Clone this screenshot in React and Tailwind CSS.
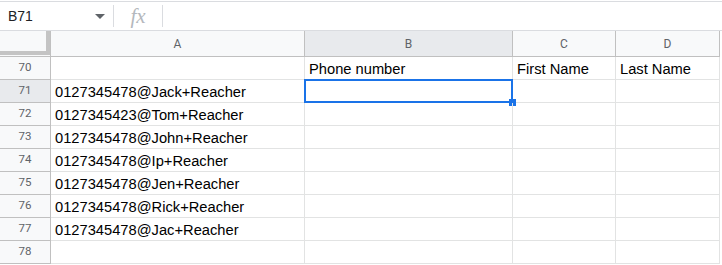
import React from "react";

const rows = [
  { n: 70, a: "", b: "Phone number", c: "First Name", d: "Last Name" },
  { n: 71, a: "0127345478@Jack+Reacher", sel: true },
  { n: 72, a: "0127345423@Tom+Reacher" },
  { n: 73, a: "0127345478@John+Reacher" },
  { n: 74, a: "0127345478@Ip+Reacher" },
  { n: 75, a: "0127345478@Jen+Reacher" },
  { n: 76, a: "0127345478@Rick+Reacher" },
  { n: 77, a: "0127345478@Jac+Reacher" },
  { n: 78, a: "" },
];

const font = { fontFamily: "Roboto, 'Liberation Sans', Arial, sans-serif" };
const cellFont = { fontFamily: "'Liberation Sans', Arial, sans-serif" };

export default function App() {
  return (
    <div className="w-[722px] h-[265px] bg-white overflow-hidden relative" style={font}>
      {/* formula bar */}
      <div className="mt-[1px] border-t border-b border-[#dadce0] h-[30px] flex items-center">
        <div className="w-[113px] h-full flex items-center pl-[8px] pr-[8px]">
          <span className="text-[14px] text-[#202124] flex-1" style={cellFont}>B71</span>
          <svg width="10" height="5" viewBox="0 0 10 5">
            <path d="M0 0 L10 0 L5 5 Z" fill="#5f6368" />
          </svg>
        </div>
        <div className="w-px h-[22px] bg-[#dadce0]" />
        <div className="w-[48px] flex justify-center">
          <span className="text-[21px] italic text-[#b4b8bd] leading-none" style={{ fontFamily: "'Liberation Serif', 'DejaVu Serif', serif" }}>fx</span>
        </div>
        <div className="w-px h-[22px] bg-[#dadce0]" />
      </div>

      {/* column header */}
      <div className="flex h-[26px]">
        <div className="w-[51px] h-full bg-[#f8f9fa] border-r border-[#c0c0c0] relative">
          <div className="absolute left-0 top-0 w-[50px] h-[24px] border-r-[4px] border-b-[4px] border-[#c4c4c4] bg-[#f8f9fa]" />
          <div className="absolute left-0 bottom-0 w-full h-px bg-[#c0c0c0]" />
        </div>
        <div className="w-[254px] h-full bg-[#f8f9fa] border-r border-b border-[#c0c0c0] flex items-center justify-center text-[12px] text-[#5f6368]">A</div>
        <div className="w-[208px] h-full bg-[#e8eaed] border-r border-b border-[#c0c0c0] flex items-center justify-center text-[12px] text-[#5f6368]">B</div>
        <div className="w-[103px] h-full bg-[#f8f9fa] border-r border-b border-[#c0c0c0] flex items-center justify-center text-[12px] text-[#5f6368]">C</div>
        <div className="w-[104px] h-full bg-[#f8f9fa] border-r border-b border-[#c0c0c0] flex items-center justify-center text-[12px] text-[#5f6368]">D</div>
      </div>

      {/* rows */}
      {rows.map((r) => (
        <div key={r.n} className="flex h-[23px]">
          <div className={`w-[51px] h-full border-r border-b border-[#c0c0c0] flex items-center justify-center text-[11.5px] text-[#5f6368] ${r.sel ? "bg-[#e8eaed]" : "bg-[#f8f9fa]"}`}>{r.n}</div>
          <div className="w-[254px] h-full border-r border-b border-[#e2e3e3] flex items-center pl-[4px] pt-[3px] text-[14.7px] text-black whitespace-nowrap" style={cellFont}>{r.a}</div>
          <div className="w-[208px] h-full border-r border-b border-[#e2e3e3] flex items-center pl-[4px] pt-[3px] text-[14.7px] text-black whitespace-nowrap relative" style={cellFont}>
            {r.b}
            {r.sel && (
              <>
                <div className="absolute left-[-1px] top-[-1px] w-[209px] h-[24px] border-2 border-[#1a73e8]" />
                <div className="absolute right-[-4px] bottom-[-4px] w-[7px] h-[7px] bg-[#1a73e8]" />
              </>
            )}
          </div>
          <div className="w-[103px] h-full border-r border-b border-[#e2e3e3] flex items-center pl-[4px] pt-[3px] text-[14.7px] text-black whitespace-nowrap" style={cellFont}>{r.c}</div>
          <div className="w-[104px] h-full border-r border-b border-[#e2e3e3] flex items-center pl-[4px] pt-[3px] text-[14.7px] text-black whitespace-nowrap" style={cellFont}>{r.d}</div>
        </div>
      ))}
    </div>
  );
}
